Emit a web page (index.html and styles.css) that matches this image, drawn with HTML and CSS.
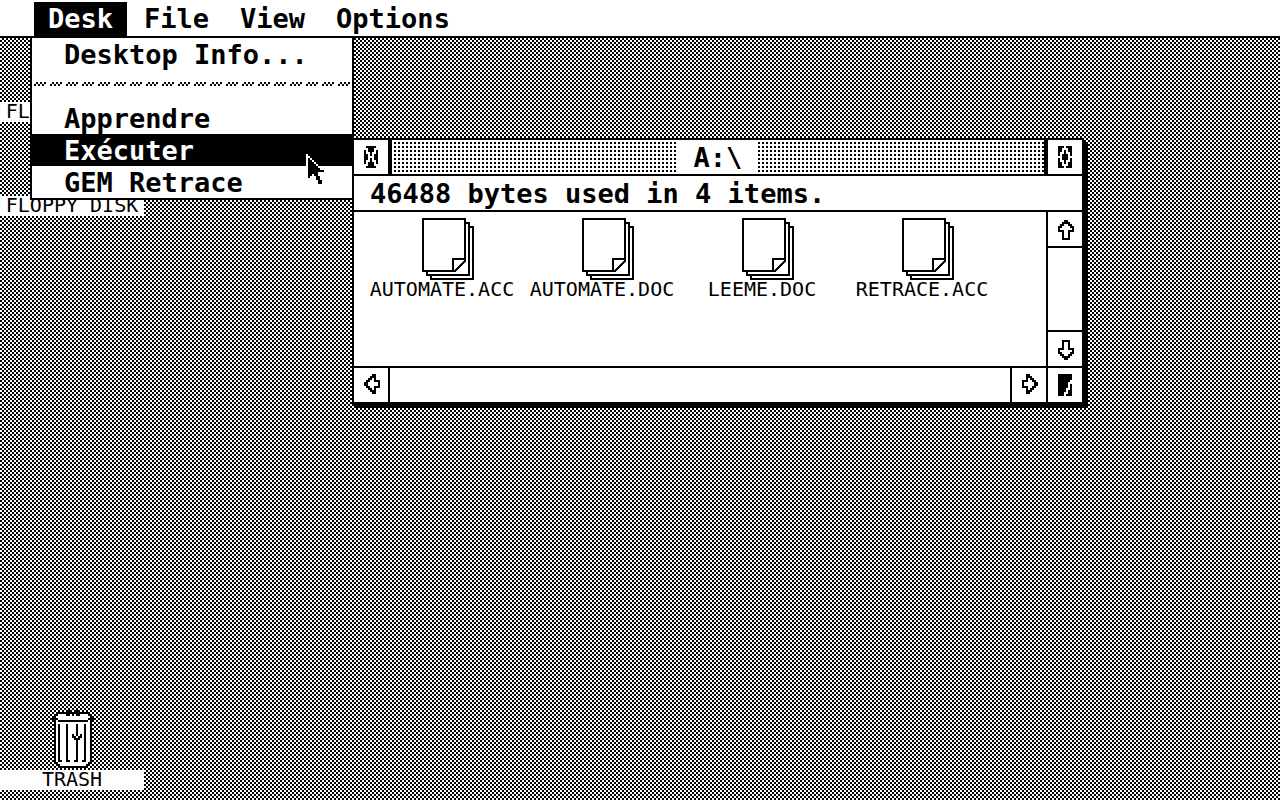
FILE: index.html
```
<!DOCTYPE html>
<html lang="fr">
<head>
<meta charset="utf-8">
<meta name="viewport" content="width=device-width, initial-scale=1">
<title>GEM Desktop</title>
<link rel="stylesheet" href="styles.css">
</head>
<body>
<svg class="defs" aria-hidden="true">
  <symbol id="doc" viewBox="0 0 26 31">
    <g fill="#fff" stroke="#000">
      <path d="M4.500 4.500H25.500V30.500H4.500z"/>
      <path d="M2.500 2.500H23.500V28.500H2.500z"/>
      <path d="M.5 .5H21.500V21.500L16.500 26.500H.5z"/>
      <path d="M15.500 26.500V20.500H21.500"/>
    </g>
  </symbol>
</svg>

<nav class="menubar">
  <button class="title open" type="button" aria-expanded="true">Desk</button>
  <button class="title" type="button">File</button>
  <button class="title" type="button">View</button>
  <button class="title" type="button">Options</button>
  <div class="dropdown">
    <button class="item" type="button">Desktop Info...</button>
    <hr class="rule">
    <button class="item" type="button">Apprendre</button>
    <button class="item active" type="button">Exécuter</button>
    <button class="item" type="button">GEM Retrace</button>
  </div>
</nav>

<main class="desktop">
  <div class="shortcut drive-a"><span class="label">FLOPPY DISK</span></div>
  <div class="shortcut drive-b"><span class="label">FLOPPY DISK</span></div>
  <div class="shortcut trash">
    <svg width="42" height="58" viewBox="0 0 21 29" shape-rendering="crispEdges" aria-hidden="true">
      <path fill="#fff" d="M3 2h15v1h1v1h1v23h-2v1H3v-1H1V4h1V3h1z"/>
      <path d="M8 0h2v1H8zM11 0h2v1h-2zM3 1h5v1H3zM9 1h1v1H9zM11 1h1v1h-1zM13 1h5v1h-5zM2 2h1v1H2zM7 2h2v1H7zM10 2h1v1h-1zM12 2h2v1h-2zM18 2h1v1h-1zM1 3h1v1H1zM19 3h1v1h-1zM0 4h3v1H0zM18 4h3v1h-3zM3 5h15v1H3z"/>
      <path d="M1 5h1v21H1zM19 5h1v21h-1zM1 26h2v1H1zM18 26h2v1h-2zM2 27h2v1H2zM17 27h2v1h-2zM3 28h15v1H3z"/>
      <path d="M3 7h1v18h1v1H3zM7 7h1v18h1v1H7zM12 7h1v6h-1zM12 15h1v11h-2v-1h1zM16 7h1v19h-2v-1h1zM10 12h1v1h1v1h1v-1h1v-1h1v2h-1v1h-3v-1h-1z"/>
    </svg>
    <span class="label">TRASH</span>
  </div>

  <section class="window">
    <header class="titlebar">
      <button class="gadget close" type="button" aria-label="Close">
        <svg width="14" height="22" viewBox="0 -.5 7 11" shape-rendering="crispEdges"><path stroke="#000" d="M1 0h5M2 1h3M0 2h1M2 2h3M6 2h1M0 3h1M3 3h1M6 3h1M0 4h2M3 4h1M5 4h2M0 5h2M5 5h2M0 6h2M3 6h1M5 6h2M0 7h1M3 7h1M6 7h1M0 8h1M2 8h3M6 8h1M2 9h3M1 10h5"/></svg>
      </button>
      <div class="mover"><h1>A:\</h1></div>
      <button class="gadget full" type="button" aria-label="Full size">
        <svg width="14" height="22" viewBox="0 -.5 7 11" shape-rendering="crispEdges"><path stroke="#000" d="M0 0h3M4 0h3M0 1h2M5 1h2M0 2h2M3 2h1M5 2h2M0 3h1M3 3h1M6 3h1M0 4h1M2 4h3M6 4h1M2 5h3M0 6h1M2 6h3M6 6h1M0 7h1M3 7h1M6 7h1M0 8h2M3 8h1M5 8h2M0 9h2M5 9h2M0 10h3M4 10h3"/></svg>
      </button>
    </header>
    <p class="info">46488 bytes used in 4 items.</p>
    <div class="content">
      <ul class="files">
        <li><svg width="52" height="62" shape-rendering="crispEdges" aria-hidden="true"><use href="#doc"/></svg><span>AUTOMATE.ACC</span></li>
        <li><svg width="52" height="62" shape-rendering="crispEdges" aria-hidden="true"><use href="#doc"/></svg><span>AUTOMATE.DOC</span></li>
        <li><svg width="52" height="62" shape-rendering="crispEdges" aria-hidden="true"><use href="#doc"/></svg><span>LEEME.DOC</span></li>
        <li><svg width="52" height="62" shape-rendering="crispEdges" aria-hidden="true"><use href="#doc"/></svg><span>RETRACE.ACC</span></li>
      </ul>
      <div class="scroll vertical">
        <button class="gadget low" type="button" aria-label="Scroll up">
          <svg width="16" height="20" viewBox="0 -.5 8 10" shape-rendering="crispEdges"><path stroke="#000" d="M3 0h2M2 1h4M1 2h2M5 2h2M0 3h2M6 3h2M0 4h1M7 4h1M0 5h3M5 5h3M2 6h1M5 6h1M2 7h1M5 7h1M2 8h1M5 8h1M2 9h4"/></svg>
        </button>
        <div class="track"></div>
        <button class="gadget low" type="button" aria-label="Scroll down">
          <svg width="16" height="20" viewBox="0 -.5 8 10" shape-rendering="crispEdges"><path stroke="#000" d="M3 9h2M2 8h4M1 7h2M5 7h2M0 6h2M6 6h2M0 5h1M7 5h1M0 4h3M5 4h3M2 3h1M5 3h1M2 2h1M5 2h1M2 1h1M5 1h1M2 0h4"/></svg>
        </button>
      </div>
    </div>
    <footer class="scroll horizontal">
      <button class="gadget" type="button" aria-label="Scroll left">
        <svg width="16" height="20" viewBox="0 -.5 8 10" shape-rendering="crispEdges"><path stroke="#000" d="M4 0h2M3 1h3M2 2h2M5 2h1M1 3h2M5 3h3M0 4h2M7 4h1M0 5h2M7 5h1M1 6h2M5 6h3M2 7h2M5 7h1M3 8h3M4 9h2"/></svg>
      </button>
      <div class="track"></div>
      <button class="gadget" type="button" aria-label="Scroll right">
        <svg width="16" height="20" viewBox="0 -.5 8 10" shape-rendering="crispEdges"><path stroke="#000" d="M2 0h2M2 1h3M2 2h1M4 2h2M0 3h3M5 3h2M0 4h1M6 4h2M0 5h1M6 5h2M0 6h3M5 6h2M2 7h1M4 7h2M2 8h3M2 9h2"/></svg>
      </button>
      <button class="gadget" type="button" aria-label="Resize">
        <svg width="14" height="22" viewBox="0 -.5 7 11" shape-rendering="crispEdges"><path stroke="#000" d="M0 0h7M0 1h7M0 2h7M0 3h6M0 4h5M0 5h5M6 5h1M0 6h5M6 6h1M0 7h4M6 7h1M0 8h4M5 8h2M0 9h3M5 9h2M0 10h3M4 10h3"/></svg>
      </button>
    </footer>
  </section>
</main>

<svg class="pointer" width="18" height="30" viewBox="0 -.5 9 15" shape-rendering="crispEdges" aria-hidden="true">
  <path stroke="#fff" d="M0 0h1M0 1h2M0 2h1M2 2h1M0 3h1M3 3h1M0 4h1M4 4h1M0 5h1M5 5h1M0 6h1M6 6h1M0 7h1M7 7h1M0 8h1M0 9h1M0 10h1M0 11h1"/>
  <path stroke="#000" d="M1 2h1M1 3h2M1 4h3M1 5h4M1 6h5M1 7h6M1 8h8M1 9h5M1 10h2M4 10h2M1 11h1M5 11h2M5 12h2M6 13h2M6 14h2"/>
</svg>
</body>
</html>
```

FILE: styles.css
```
* {
  box-sizing: border-box;
}

body {
  margin: 0;
  min-height: 100vh;
  display: flex;
  flex-direction: column;
  overflow: hidden;
  background: #fff;
  color: #000;
  font: bold 27px/32px "DejaVu Sans Mono", monospace;
}

button {
  margin: 0;
  border: 0;
  border-radius: 0;
  background: #fff;
  color: #000;
  font: inherit;
}

svg {
  display: block;
}

.defs {
  position: absolute;
  width: 0;
  height: 0;
}

/* Menu bar */

.menubar {
  position: relative;
  z-index: 2;
  display: flex;
  gap: 3px;
  padding: 2px 0 0 34px;
  border-bottom: 2px solid #000;
  background: #fff;
}

.title {
  padding: 0 14px;
  line-height: 34px;
}

.title.open,
.item.active {
  background: #000;
  color: #fff;
}

.dropdown {
  position: absolute;
  top: 100%;
  left: 30px;
  width: 324px;
  border: 2px solid #000;
  background: #fff;
}

.item {
  display: block;
  width: 100%;
  padding: 2px 0 0 32px;
  line-height: 30px;
  text-align: left;
}

.rule {
  height: 4px;
  margin: 12px 0 16px 2px;
  border: 0;
  background:
    linear-gradient(90deg, transparent 12px, #fff 0) 0 0 / 16px 4px,
    repeating-conic-gradient(#000 0 25%, #fff 0 50%) 0 0 / 4px 4px;
}

/* Desktop */

.desktop {
  position: relative;
  flex: 1;
  background: repeating-conic-gradient(#000 0 25%, #fff 0 50%) 0 0 / 4px 4px;
}

.shortcut {
  position: absolute;
  left: 0;
  width: 144px;
  display: flex;
  flex-direction: column;
  align-items: center;
  gap: 2px;
}

.drive-a {
  top: 64px;
}

.drive-b {
  top: 158px;
}

.trash {
  bottom: 10px;
}

.trash svg {
  margin-left: 2px;
}

.label,
.files span {
  font: 20px/18px "DejaVu Sans Mono", monospace;
}

.label {
  width: 100%;
  padding-bottom: 2px;
  background: #fff;
  text-align: center;
}

/* Window */

.window {
  position: absolute;
  top: 100px;
  left: 352px;
  width: 732px;
  border: 2px solid #000;
  background: #fff;
  box-shadow: 2px 2px 0 #000, 4px 4px 0 #000;
}

.titlebar,
.info,
.content {
  border-bottom: 2px solid #000;
}

.titlebar {
  display: flex;
}

.gadget {
  flex: none;
  width: 34px;
  height: 34px;
  padding: 6px 0 0 10px;
  display: flex;
  align-items: flex-start;
}

.gadget.low {
  padding-top: 8px;
}

.mover {
  flex: 1;
  display: flex;
  justify-content: center;
  border: solid #000;
  border-width: 0 4px;
  background: conic-gradient(#fff 25%, #000 0 50%, #fff 0) 0 0 / 4px 4px;
}

.mover h1 {
  margin: 0;
  padding: 2px 16px 0;
  background: #fff;
  font: inherit;
}

.info {
  margin: 0;
  padding: 2px 16px 0;
}

.content {
  display: flex;
}

.files {
  flex: 1;
  display: flex;
  flex-wrap: wrap;
  align-content: flex-start;
  min-height: 154px;
  margin: 0;
  padding: 6px 0 0 8px;
  list-style: none;
}

.files li {
  width: 160px;
  display: flex;
  flex-direction: column;
  align-items: center;
}

.files svg {
  margin-left: 12px;
}

.scroll {
  display: flex;
}

.track {
  flex: 1;
}

.vertical {
  flex-direction: column;
  border-left: 2px solid #000;
}

.vertical .track {
  border: solid #000;
  border-width: 2px 0;
}

.horizontal .track {
  border: solid #000;
  border-width: 0 2px;
}

.horizontal .gadget:last-child {
  width: 36px;
  border-left: 2px solid #000;
}

/* Mouse pointer */

.pointer {
  position: absolute;
  z-index: 3;
  top: 154px;
  left: 306px;
}
```
